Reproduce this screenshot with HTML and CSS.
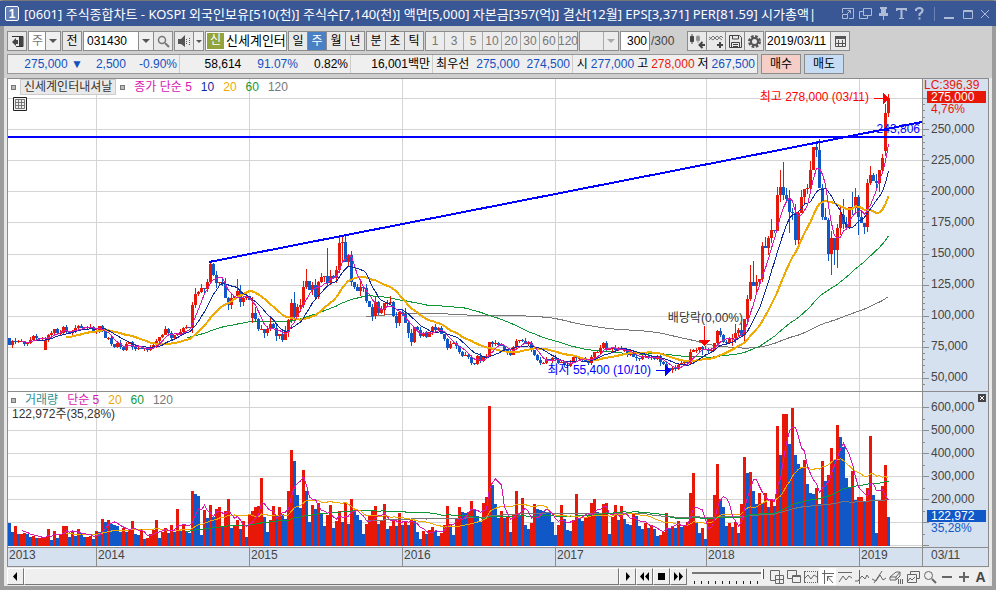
FILE: index.html
```html
<!DOCTYPE html>
<html lang="ko">
<head>
    <meta charset="UTF-8">
    <meta name="viewport" content="width=device-width, initial-scale=1.0">
    <title>[0601] 주식종합차트</title>
    <link rel="stylesheet" href="styles.css">
</head>

<body>
<div class="window">
    <header class="titlebar">
        <span class="badge">1</span>
        <h1>[0601] 주식종합차트 - KOSPI 외국인보유[510(천)] 주식수[7,140(천)] 액면[5,000] 자본금[357(억)] 결산[12월] EPS[3,371] PER[81.59] 시가총액|</h1>
        <div class="title-tools">
            <button aria-label="창 크기"><svg width="13" height="13" viewBox="0 0 13 13"><path d="M1.500 6V1.500h11v10H8M1.500 7.500h5v4h-5zM6 7l3-3M6.500 3.500h3v3"/></svg></button>
            <button aria-label="창 복사"><svg width="13" height="13" viewBox="0 0 13 13"><path d="M4.500 1.500h8v7h-8zM4 4.500H.5v7h8V9"/></svg></button>
            <button aria-label="고정"><svg width="13" height="13" viewBox="0 0 13 13"><path class="fill" d="M3 0h7v2H9v4h2v3H7v4H6V9H2V6h2V2H3z"/></svg></button>
            <button aria-label="글꼴"><svg width="13" height="13" viewBox="0 0 13 13"><path class="fill" d="M1 1h11v3h-1l-1-1H7.500v8H9v1H4v-1h1.500V3H3L2 4H1z"/></svg></button>
            <button aria-label="도움말"><svg width="13" height="13" viewBox="0 0 13 13"><path class="thick" d="M3 4V2.500Q6.500-.5 9.500 2.500 10 5 6.500 7v2M6.500 10.500v2"/></svg></button>
            <i></i>
            <button aria-label="최소화"><svg width="13" height="13" viewBox="0 0 13 13"><path class="thick" d="M1 11h10"/></svg></button>
            <button aria-label="최대화"><svg width="13" height="13" viewBox="0 0 13 13"><path d="M2.500 3.500h9v8h-9zM2 4.500h9"/></svg></button>
            <button aria-label="닫기"><svg width="13" height="13" viewBox="0 0 13 13"><path d="M2 3l8 8M10 3l-8 8"/></svg></button>
        </div>
    </header>

    <div class="toolbar">
        <div class="group">
            <button class="btn" aria-label="목록"><svg width="13" height="13" viewBox="0 0 13 13"><path d="M1 1.500h11v10H5M8.500 2v9" fill="none" stroke="#333"/><path d="M9 2h3v9H9zM1 7l4-4v2h2v4H5v2z" fill="#444"/></svg></button>
        </div>
        <div class="group">
            <select class="kind gray" aria-label="종목 구분"><option>주</option></select>
            <span class="arrow"></span>
        </div>
        <div class="group"><button class="btn">전</button></div>
        <div class="group">
            <input class="code" type="text" value="031430" aria-label="종목코드">
            <button class="arrow" aria-label="코드 목록"></button>
            <button class="btn" aria-label="찾기"><svg width="13" height="13" viewBox="0 0 13 13"><circle cx="5" cy="5" r="3.500" fill="none" stroke="#777" stroke-width="1.500"/><path d="M8 8l4 4" stroke="#777" stroke-width="2"/></svg></button>
        </div>
        <div class="group">
            <button class="btn" aria-label="소리"><svg width="13" height="13" viewBox="0 0 13 13"><path d="M0 4h3l4-4v12L3 9H0z" fill="#555"/><path d="M8.500 4v5M11.500 3v7" stroke="#555" stroke-dasharray="1 1"/></svg></button>
            <button class="arrow slim" aria-label="소리 목록"></button>
        </div>
        <div class="group name"><b>신</b><span>신세계인터</span></div>
        <div class="group">
            <button class="btn">일</button>
            <button class="btn on">주</button>
            <button class="btn">월</button>
            <button class="btn">년</button>
        </div>
        <div class="group">
            <button class="btn">분</button>
            <button class="btn">초</button>
            <button class="btn">틱</button>
        </div>
        <div class="group dim">
            <button class="btn">1</button>
            <button class="btn">3</button>
            <button class="btn">5</button>
            <button class="btn">10</button>
            <button class="btn">20</button>
            <button class="btn">30</button>
            <button class="btn">60</button>
            <button class="btn">120</button>
        </div>
        <div class="group dim">
            <select class="minute" aria-label="분 선택"><option></option></select>
            <span class="arrow"></span>
        </div>
        <div class="group">
            <input class="count" type="text" value="300" aria-label="봉 개수">
        </div>
        <span class="total">/300</span>
        <div class="group icons">
            <button class="btn" aria-label="봉 추가"><svg width="15" height="15" viewBox="0 0 15 15"><path d="M.5 2.500h3v5h-3zM2 0v10" fill="#444" stroke="#444"/><path d="M6.500 2.500h3v4h-3zM8 1v8" fill="#888" stroke="#999"/><path d="M9 11h6M12.500 8l-3 3 3 3" fill="none" stroke="#444" stroke-width="2"/></svg></button>
            <button class="btn" aria-label="지표 추가"><svg width="15" height="15" viewBox="0 0 15 15"><path d="M0 6l4-4 4 4 4-4 2 2M0 3l4 3 4-4 5 4" fill="none" stroke="#777"/><path d="M8 11h6M11 8v6" stroke="#444" stroke-width="2"/></svg></button>
            <button class="btn" aria-label="저장"><svg width="15" height="15" viewBox="0 0 15 15"><path d="M1.500 1.500h10l2 2v10h-12zM4.500 1v4h6V1M3.500 14V8.500h8V14M5 10.500h5M5 12.500h5" fill="none" stroke="#444"/></svg></button>
            <button class="btn" aria-label="설정"><svg width="15" height="15" viewBox="0 0 15 15"><circle cx="7.500" cy="7.500" r="5" fill="none" stroke="#555" stroke-width="3" stroke-dasharray="2.500 1.430"/><circle cx="7.500" cy="7.500" r="3.500" fill="none" stroke="#555" stroke-width="2"/></svg></button>
        </div>
        <div class="group">
            <input class="date" type="text" value="2019/03/11" aria-label="날짜">
            <button class="btn" aria-label="달력"><svg width="13" height="13" viewBox="0 0 13 13"><path d="M1.500 1.500h10v10h-10zM1 8.500h11M4.500 5v7M8.500 5v7" fill="none" stroke="#555"/><path d="M1 1h11v3H1z" fill="#555"/></svg></button>
        </div>
    </div>

    <div class="quote">
        <div class="strip">
            <div class="cell c1 down"><span>275,000 ▼</span><span>2,500</span><span>-0.90%</span></div>
            <div class="cell c2"><span>58,614</span><span class="down">91.07%</span><span>0.82%</span></div>
            <div class="cell c3"><span>16,001백만</span></div>
            <div class="cell c4"><span>최우선</span><span class="down">275,000</span><span class="down">274,500</span></div>
            <div class="cell c5"><span>시</span><span class="down">277,000</span><span>고</span><span class="up">278,000</span><span>저</span><span class="down">267,500</span></div>
        </div>
        <button class="buy">매수</button>
        <button class="sell">매도</button>
    </div>

    <main class="chart">
        <section class="plot price">
            <svg id="price" viewBox="8 79 914 312" preserveAspectRatio="none"></svg>
            <div class="legend">
                <i></i><span class="stock">신세계인터내셔날</span><i></i>
                <span class="ma5">종가 단순 5</span><span class="ma10">10</span><span class="ma20">20</span><span class="ma60">60</span><span class="ma120">120</span>
            </div>
            <button class="gridbtn" aria-label="표"><svg width="14" height="14" viewBox="0 0 14 14"><path d="M.5.500h13v13H.5z" fill="#eee" stroke="#222"/><path d="M2.500 2.500h9v9h-9zM3 5.500h8M3 8.500h8M5.500 3v8M8.500 3v8" fill="none" stroke="#777"/></svg></button>
            <span class="note high">최고 278,000 (03/11)</span>
            <span class="note level">243,806</span>
            <span class="note drop">배당락(0,00%)</span>
            <span class="note low">최저 55,400 (10/10)</span>
        </section>
        <aside class="axis price-axis">
            <svg id="priceTicks" width="8" height="312" viewBox="0 79 8 312"></svg>
            <span class="lc">LC:396,39</span>
            <span class="now">275,000</span>
            <span class="rate">4,76%</span>
            <ol>
                <li>250,000</li><li>225,000</li><li>200,000</li><li>175,000</li><li>150,000</li>
                <li>125,000</li><li>100,000</li><li>75,000</li><li>50,000</li>
            </ol>
        </aside>

        <section class="plot volume">
            <svg id="volume" viewBox="8 392 914 155" preserveAspectRatio="none"></svg>
            <div class="legend">
                <i></i><span class="vol">거래량</span>
                <span class="ma5">단순 5</span><span class="ma20">20</span><span class="ma60">60</span><span class="ma120">120</span>
            </div>
            <p>122,972주(35,28%)</p>
        </section>
        <aside class="axis volume-axis">
            <svg id="volumeTicks" width="8" height="155" viewBox="0 392 8 155"></svg>
            <button class="close" aria-label="닫기"><svg width="8" height="8" viewBox="0 0 8 8"><path d="M2 2l4 4M6 2L2 6" stroke="#fff"/></svg></button>
            <ol>
                <li>600,000</li><li>500,000</li><li>400,000</li><li>300,000</li><li>200,000</li>
            </ol>
            <span class="now">122,972</span>
            <span class="rate">35,28%</span>
        </aside>

        <div class="years">
            <span>2013</span><span>2014</span><span>2015</span><span>2016</span><span>2017</span><span>2018</span><span>2019</span>
        </div>
        <div class="axis today">03/11</div>
    </main>

    <footer class="controls">
        <button class="step" aria-label="이전"><svg width="9" height="9" viewBox="0 0 9 9"><path d="M6 0v9L2 4.500z"/></svg></button>
        <div class="track"></div>
        <button class="step" aria-label="다음"><svg width="9" height="9" viewBox="0 0 9 9"><path d="M3 0v9l4-4.500z"/></svg></button>
        <button class="step" aria-label="빠르게 뒤로"><svg width="9" height="9" viewBox="0 0 9 9"><path d="M4 0v9L0 4.500zM9 0v9L5 4.500z"/></svg></button>
        <button class="step" aria-label="정지"><svg width="9" height="9" viewBox="0 0 9 9"><path d="M1 1h7v7H1z"/></svg></button>
        <button class="step" aria-label="빠르게 앞으로"><svg width="9" height="9" viewBox="0 0 9 9"><path d="M0 0v9l4-4.500zM5 0v9l4-4.500z"/></svg></button>
        <input class="zoom" type="range" min="0" max="10" value="10" aria-label="확대">
        <div class="draw">
            <button aria-label="창 추가"><svg viewBox="0 0 14 14"><path d="M9.500 5V.5h-9v10H5M5.500 5.500h8v8h-8zM5 9.500h8M9.500 5v8"/></svg></button>
            <button aria-label="창 겹침"><svg viewBox="0 0 14 14"><path d="M9.500 5V.5h-9v8H5M5.500 5.500h8v7h-8zM5 6.500h8"/></svg></button>
            <button aria-label="범위"><svg viewBox="0 0 14 14"><path d="M.5 1v12M13.500 1v12M1 8l3-3 3 4 3-4 3 2"/><path stroke-dasharray="1 1" d="M1 1.500h12M1 12.500h12"/></svg></button>
            <button class="on" aria-label="십자선"><svg viewBox="0 0 14 14"><path d="M1 3.500h12M3.500 0v14M6 6l6 7M6.500 11V6.500h5"/></svg></button>
            <button aria-label="수평선"><svg viewBox="0 0 14 14"><path d="M0 2.500h14M1 12l4-6 3 4 3-4 3 2"/></svg></button>
            <button aria-label="수직선"><svg viewBox="0 0 14 14"><path d="M4.500 0v14M0 11h3l4-5 3 3 2-4 2 3"/></svg></button>
            <button aria-label="추세선"><svg viewBox="0 0 14 14"><path d="M2 13L10 1M0 9l4 2 4-6 3 5 3-2"/></svg></button>
            <button aria-label="지우개"><svg viewBox="0 0 14 14"><path d="M1 7l6-5h4l-4 5zM1 7v3h6l4-4V2M7 7v3M9.500 9v5M11.500 9v5M13.500 9v5"/></svg></button>
            <button aria-label="차트 형태"><svg viewBox="0 0 14 14"><path d="M4.500 4V1.500h9v7H11M1.500 4.500h9v8h-9zM2 11l2-3 2 2 3-3"/></svg></button>
            <button aria-label="돋보기"><svg viewBox="0 0 14 14"><circle cx="5.500" cy="5.500" r="4"/><path class="thick" d="M9 9l4 4"/></svg></button>
            <button aria-label="축소"><svg viewBox="0 0 14 14"><path class="thick" d="M2 7h10"/></svg></button>
            <button aria-label="확대"><svg viewBox="0 0 14 14"><path class="thick" d="M2 7h10M7 2v10"/></svg></button>
            <button class="auto">A</button>
        </div>
    </footer>
</div>
<script src="chart.js"></script>
</body>
</html>
```
FILE: styles.css
```css
* {
    box-sizing: border-box;
    margin: 0;
    padding: 0;
}

body {
    font-family: "Liberation Sans", "Noto Sans CJK KR", sans-serif;
    font-size: 12px;
    line-height: 14px;
    color: #000;
    background-color: #9c9c9c;
}

button, input, select {
    font: inherit;
    color: inherit;
    border: none;
    background: none;
    border-radius: 0;
    appearance: none;
}

button {
    display: flex;
    align-items: center;
    justify-content: center;
}

ol {
    list-style: none;
}

.window {
    display: flex;
    flex-direction: column;
    min-height: 100vh;
    background-color: #e8e8e8;
    border: 4px solid #9c9c9c;
    border-top: 1px solid #777;
}

/* title bar */
.titlebar {
    display: flex;
    align-items: center;
    height: 25px;
    margin: 0 -4px;
    padding: 0 4px 0 5px;
    background-color: #3a5795;
    color: #fff;
}

.badge {
    width: 14px;
    height: 15px;
    border: 1px solid #fff;
    border-radius: 2px;
    background-color: #6480b5;
    font-weight: bold;
    text-align: center;
    line-height: 14px;
}

h1 {
    flex: 1;
    margin-left: 5px;
    overflow: hidden;
    font-family: "Noto Sans", "Noto Sans CJK KR", sans-serif;
    font-size: 13px;
    font-weight: normal;
    line-height: 20px;
    white-space: nowrap;
}

.title-tools {
    display: flex;
    align-items: center;
    gap: 5px;
}

.title-tools i {
    width: 1px;
    height: 14px;
    margin: 0 3px;
    background-color: #6d83b1;
}

.title-tools path {
    fill: none;
    stroke: #aebbd6;
}

.title-tools .fill {
    fill: #aebbd6;
    stroke: none;
}

.title-tools .thick {
    stroke-width: 2;
}

/* toolbar */
.toolbar {
    display: flex;
    align-items: center;
    height: 28px;
    padding: 2px 3px 0;
    gap: 1px;
    background-color: #cfcfcf;
}

.group {
    display: flex;
    height: 20px;
    border: 1px solid #8c8c8c;
    background-color: #8c8c8c;
    gap: 1px;
}

.btn {
    width: 18px;
    background-color: #e9e9e9;
}

.btn.on {
    background-color: #4a80c4;
    color: #fff;
}

.dim {
    background-color: #aaa;
    color: #777;
}

.dim .btn, .dim .arrow, .dim select {
    background-color: #ececec;
}

.arrow {
    display: flex;
    align-items: center;
    justify-content: center;
    width: 14px;
    background-color: #f0f0f0;
}

.arrow::before {
    content: "";
    border: 4px solid transparent;
    border-top-color: #555;
    border-bottom: none;
}

.arrow.slim {
    width: 9px;
}

.arrow.slim::before {
    border-width: 3px;
    border-bottom: none;
}

.dim .arrow::before {
    border-top-color: #aaa;
}

select, input {
    background-color: #fff;
}

.kind {
    width: 16px;
    padding-left: 3px;
}

.gray {
    color: #777;
}

.code {
    width: 54px;
    padding-left: 3px;
}

.name {
    align-items: center;
    width: 82px;
    background-color: #fff;
    overflow: hidden;
    white-space: nowrap;
}

.name b {
    width: 17px;
    height: 16px;
    margin: 0 1px;
    background-color: #93a43c;
    color: #fff;
    font-weight: normal;
    text-align: center;
}

.name span {
    font-size: 13px;
}

.minute {
    width: 23px;
}

.count {
    width: 28px;
    padding-right: 2px;
    text-align: right;
}

.total {
    width: 35px;
    color: #444;
}

.date {
    width: 64px;
    padding-left: 1px;
}

/* quote strip */
.quote {
    display: flex;
    height: 24px;
    padding: 0 3px 4px;
    gap: 3px;
    background-color: #cfcfcf;
}

.strip {
    display: flex;
    border: 1px solid #999;
    background-color: #efefef;
}

.cell {
    display: flex;
    align-items: center;
    justify-content: flex-end;
    padding-right: 2px;
    border-right: 1px solid #ccc;
    white-space: nowrap;
}

.c1 {
    width: 172px;
    gap: 13px;
}

.c2 {
    width: 171px;
    gap: 16px;
}

.c3 {
    width: 82px;
}

.c4 {
    width: 140px;
    gap: 7px;
}

.c5 {
    width: 184px;
    gap: 3px;
    border-right: none;
}

.down {
    color: #1450c0;
}

.up {
    color: #e81808;
}

.buy, .sell {
    width: 40px;
    border: 1px solid #8c8c8c;
    background-color: #f6cec8;
}

.sell {
    background-color: #c6dcf4;
}

/* chart */
.chart {
    display: grid;
    grid-template-columns: 1fr 66px;
    grid-template-rows: 313px 156px 18px;
    margin: 0 3px;
    border: 1px solid #8c8c8c;
}

.plot {
    position: relative;
    background-color: #fff;
    border-bottom: 1px solid #8c8c8c;
}

.plot > svg {
    position: absolute;
    width: 100%;
    height: 100%;
    shape-rendering: crispEdges;
}

.legend {
    position: relative;
    display: flex;
    align-items: center;
    height: 16px;
    padding-left: 3px;
    gap: 9px;
}

.legend i {
    width: 5px;
    height: 5px;
    border: 1px solid #777;
    background-color: #bbb;
}

.legend .stock {
    margin: 0 -5px;
    padding: 0 3px;
    border: 1px solid #ccc;
    background-color: #e9e9e9;
    color: #333;
}

.ma5 { color: #d818b0; }
.ma10 { color: #1028a0; }
.ma20 { color: #eeaa00; }
.ma60 { color: #109838; }
.ma120 { color: #777; }
.vol { color: #309090; }

.volume p {
    position: relative;
    padding-left: 4px;
    line-height: 12px;
    color: #333;
}

.gridbtn {
    position: absolute;
    top: 18px;
    left: 5px;
}

.note {
    position: absolute;
    white-space: nowrap;
}

.high {
    top: 11px;
    right: 53px;
    color: red;
}

.level {
    top: 43px;
    right: 2px;
    color: #00f;
}

.drop {
    top: 232px;
    right: 179px;
    color: #333;
}

.low {
    top: 284px;
    right: 271px;
    color: #00f;
}

.axis {
    position: relative;
    border-left: 1px solid #8c8c8c;
    border-bottom: 1px solid #8c8c8c;
    background-color: #d6e1ef;
    color: #444;
}

.axis > svg {
    position: absolute;
    left: 0;
    top: 0;
    shape-rendering: crispEdges;
}

.axis li {
    padding-left: 8px;
}

.price-axis ol {
    padding-top: 7px;
}

.price-axis li {
    height: 31px;
}

.volume-axis ol {
    padding-top: 8px;
}

.volume-axis li {
    height: 23px;
}

.axis span {
    display: block;
    position: relative;
    padding-left: 8px;
    color: #e81808;
    line-height: 12px;
}

.axis .lc {
    padding-left: 1px;
}

.axis .now {
    margin: 0 2px 0 4px;
    padding-left: 4px;
    background-color: #e81808;
    color: #fff;
}

.volume-axis .now {
    margin-top: -5px;
    background-color: #1058c8;
}

.volume-axis .rate {
    color: #1058c8;
}

.close {
    position: absolute;
    top: 2px;
    right: 2px;
    background-color: #444;
}

.years {
    display: grid;
    grid-template-columns: 88fr 153fr 153fr 153fr 151fr 153fr 63fr;
    background-color: #d6e1ef;
    color: #444;
    line-height: 15px;
}

.years span {
    padding-left: 1px;
    border-left: 1px solid #8c8c8c;
}

.years span:first-child {
    border-left: none;
}

.today {
    padding-left: 8px;
    border-bottom: none;
}

/* bottom controls */
.controls {
    display: flex;
    height: 17px;
    margin: 1px 3px 0;
    background-color: #efefef;
}

.step, .track {
    width: 17px;
    border: 1px solid #fff;
    border-right-color: #777;
    border-bottom-color: #777;
}

.track {
    flex: 1;
}

.zoom {
    width: 72px;
    height: 16px;
    margin-left: 5px;
    background: linear-gradient(#777, #777) 0 4px / 100% 2px no-repeat, repeating-linear-gradient(90deg, #222 0 1px, transparent 1px 7px) 2px 13px / 100% 3px no-repeat;
}

.zoom::-webkit-slider-thumb {
    appearance: none;
    width: 3px;
    height: 10px;
    margin-top: -5px;
    background-color: #fff;
    border-right: 1px solid #555;
}

.draw {
    display: flex;
    margin-left: 4px;
}

.draw button {
    width: 17px;
}

.draw .on {
    background-color: #fff;
}

.draw svg {
    width: 14px;
    height: 14px;
    fill: none;
    stroke: #666;
}

.draw .thick {
    stroke-width: 2;
}

.draw .auto {
    color: #444;
    font-size: 14px;
    font-weight: bold;
}
```
FILE: chart.js
```js
const RED = '#e81808';
const BLUE = '#1058c8';
const LEFT = 8;
const STEP = 3;

// weekly closes as plot rows (smaller = higher price)
const closes = [
    345, 341, 342, 341, 341, 344, 343, 340, 336, 338, 339, 338, 340, 335, 333, 329, 333, 333, 327, 332,
    333, 331, 328, 326, 328, 327, 328, 327, 331, 331, 326, 331, 338, 338, 344, 347, 343, 347, 350, 344,
    342, 347, 349, 348, 349, 348, 350, 348, 345, 341, 337, 335, 329, 333, 338, 335, 334, 332, 328, 327,
    328, 305, 294, 292, 288, 289, 282, 264, 275, 283, 282, 284, 298, 305, 298, 296, 291, 302, 298, 296,
    300, 313, 319, 329, 329, 333, 329, 324, 328, 336, 334, 340, 332, 320, 303, 317, 307, 305, 287, 281,
    290, 285, 297, 282, 277, 276, 283, 276, 278, 270, 243, 242, 262, 255, 282, 287, 291, 287, 288, 301,
    307, 316, 302, 313, 310, 303, 303, 302, 316, 323, 312, 314, 323, 333, 342, 327, 330, 336, 333, 337,
    332, 327, 330, 328, 334, 339, 348, 344, 343, 346, 352, 356, 355, 357, 363, 364, 356, 361, 357, 356,
    342, 344, 343, 345, 346, 350, 353, 355, 347, 341, 340, 341, 344, 343, 350, 355, 360, 363, 363, 359,
    360, 358, 359, 363, 362, 365, 366, 363, 357, 358, 358, 360, 361, 363, 357, 352, 352, 348, 343, 350,
    349, 348, 350, 348, 350, 350, 355, 353, 357, 358, 359, 356, 356, 357, 358, 359, 356, 362, 364, 368,
    370, 368, 369, 365, 363, 362, 363, 352, 350, 350, 347, 349, 349, 351, 350, 343, 331, 335, 342, 343,
    339, 338, 333, 330, 335, 319, 299, 282, 286, 282, 279, 246, 248, 238, 230, 231, 195, 187, 195, 199,
    212, 213, 240, 213, 197, 189, 188, 170, 147, 150, 188, 217, 220, 254, 238, 250, 228, 215, 224, 228,
    207, 208, 197, 217, 223, 227, 183, 175, 181, 183, 170, 158, 113, 98
];

// open, high, low of the weeks that stand out
const special = {
    12: { open: 350 },
    67: { high: 261 },
    76: { high: 279 },
    81: { open: 318, high: 297 },
    94: { high: 299 },
    95: { high: 292 },
    98: { high: 281 },
    99: { high: 269 },
    106: { high: 248 },
    110: { high: 236 },
    111: { high: 236, low: 262 },
    217: { low: 366 },
    220: { low: 372 },
    231: { low: 354 },
    247: { high: 265 },
    248: { high: 261 },
    254: { high: 219 },
    256: { high: 187 },
    257: { high: 170 },
    258: { high: 162 },
    260: { low: 233, high: 190 },
    263: { low: 248 },
    268: { high: 165 },
    269: { high: 141 },
    270: { high: 139, low: 168 },
    274: { low: 275 },
    275: { low: 265 },
    276: { low: 267 },
    278: { high: 199 },
    281: { high: 192 },
    283: { low: 235 },
    290: { low: 192 },
    292: { open: 151, low: 156 },
    293: { open: 113, high: 94, low: 117 }
};

const volumes = [
    23, 14, 20, 12, 12, 13, 12, 9, 10, 8, 8, 9, 9, 17, 6, 15, 8, 12, 20, 20,
    9, 14, 10, 17, 13, 9, 9, 10, 7, 15, 14, 27, 24, 26, 22, 21, 20, 14, 18, 14,
    17, 25, 12, 11, 15, 7, 8, 12, 16, 26, 8, 14, 18, 13, 21, 14, 37, 15, 22, 15,
    13, 55, 52, 50, 11, 36, 28, 41, 29, 37, 39, 19, 35, 47, 18, 21, 26, 17, 25, 9,
    32, 35, 39, 40, 68, 29, 14, 26, 40, 31, 39, 32, 27, 55, 96, 85, 51, 38, 76, 55,
    24, 41, 37, 43, 33, 20, 31, 41, 18, 25, 35, 24, 44, 22, 47, 35, 31, 26, 12, 22,
    31, 36, 40, 22, 25, 42, 17, 20, 26, 20, 33, 21, 24, 21, 26, 25, 14, 7, 15, 12,
    16, 19, 15, 10, 13, 21, 40, 22, 11, 27, 39, 34, 33, 34, 45, 36, 30, 24, 43, 49,
    140, 61, 42, 28, 35, 28, 30, 14, 32, 55, 31, 48, 21, 17, 23, 42, 37, 36, 35, 34,
    33, 24, 11, 21, 41, 27, 16, 15, 26, 52, 27, 25, 28, 30, 43, 47, 34, 30, 42, 43,
    12, 29, 41, 26, 40, 27, 22, 21, 33, 30, 20, 17, 23, 18, 21, 17, 10, 11, 14, 33,
    18, 20, 18, 25, 19, 20, 24, 53, 73, 23, 13, 18, 7, 27, 27, 51, 82, 47, 39, 20,
    23, 19, 24, 13, 42, 89, 73, 74, 55, 42, 53, 43, 53, 39, 46, 40, 120, 91, 132, 132,
    102, 138, 91, 82, 78, 86, 62, 53, 52, 58, 42, 85, 65, 71, 98, 86, 121, 109, 99, 68,
    58, 75, 46, 49, 49, 44, 58, 110, 51, 13, 46, 60, 81, 29
];

const years = [96, 249, 402, 555, 706, 859];

function rect(x, y, w, h, fill) {
    return `<rect x="${x}" y="${y}" width="${w}" height="${Math.max(h, 1)}" fill="${fill}"/>`;
}

function average(values, span, color, width, toRow) {
    const points = [];
    for (let i = span - 1; i < values.length; i++) {
        let sum = 0;
        for (let j = i - span + 1; j <= i; j++) sum += values[j];
        points.push((LEFT + i * STEP + 1.5) + ',' + toRow(sum / span).toFixed(1));
    }
    return `<polyline points="${points.join(' ')}" fill="none" stroke="${color}" stroke-width="${width}"/>`;
}

function grid(first, gap, count, top, height) {
    let out = '';
    for (let i = 0; i < count; i++) out += rect(LEFT, Math.round(first + i * gap), 914, 1, '#d4d4d4');
    for (const x of years) out += rect(x, top, 1, height, '#d4d4d4');
    return out;
}

function drawPrice() {
    const same = v => v;
    let out = grid(98, 31.1, 10, 79, 312);
    let candles = '';
    closes.forEach((close, i) => {
        const s = special[i] || {};
        const open = s.open || (i ? closes[i - 1] : 338);
        const top = Math.min(open, close);
        const bottom = Math.max(open, close);
        const reach = i > 240 ? 9 : (i > 60 && i < 135 ? 6 : 3);
        const high = s.high || top - (i * 7 % 5) * reach / 4;
        const low = s.low || bottom + (i * 11 % 4) * reach / 4;
        const color = close <= open ? RED : BLUE;
        const x = LEFT + i * STEP;
        candles += rect(x + 1, Math.round(high), 1, Math.round(low - high), color);
        candles += rect(x, top, 3, bottom - top, color);
    });
    out += average(closes, 120, '#777', 1, same);
    out += average(closes, 60, '#109838', 1, same);
    out += candles;
    out += average(closes, 20, '#eeaa00', 2, same);
    out += average(closes, 10, '#1028a0', 1, same);
    out += average(closes, 5, '#d818b0', 1, same);
    // trend line and level
    out += '<path d="M209 262L922 122M8 137H922" fill="none" stroke="#00f" stroke-width="2"/>';
    // markers
    out += '<path d="M874 98.500h10" stroke="red"/><path d="M883 93v11l6-5.500z" fill="red"/>';
    out += '<path d="M704.500 326v15" stroke="red"/><path d="M699 340h11l-5.500 6z" fill="red"/>';
    out += '<path d="M656 370.500h10" stroke="#00f"/><path d="M665 365v11l6-5.500z" fill="#00f"/>';
    document.getElementById('price').innerHTML = out;
}

function drawVolume() {
    const toRow = v => 546 - v;
    let out = grid(407, 23, 7, 392, 155);
    volumes.forEach((v, i) => {
        const color = i && v >= volumes[i - 1] ? RED : BLUE;
        out += rect(LEFT + i * STEP, 546 - v, 3, v, color);
    });
    out += average(volumes, 120, '#777', 1, toRow);
    out += average(volumes, 60, '#109838', 1, toRow);
    out += average(volumes, 20, '#eeaa00', 1, toRow);
    out += average(volumes, 5, '#d818b0', 1, toRow);
    document.getElementById('volume').innerHTML = out;
}

function drawTicks(id, first, gap, count, every) {
    let out = '';
    for (let i = 0; i < count; i++) {
        out += rect(0, Math.round(first + i * gap), i % every ? 2 : 6, 1, '#8c8c8c');
    }
    document.getElementById(id).innerHTML = out;
}

drawPrice();
drawVolume();
drawTicks('priceTicks', 98, 6.22, 47, 5);
drawTicks('volumeTicks', 407, 11.5, 13, 2);
```
